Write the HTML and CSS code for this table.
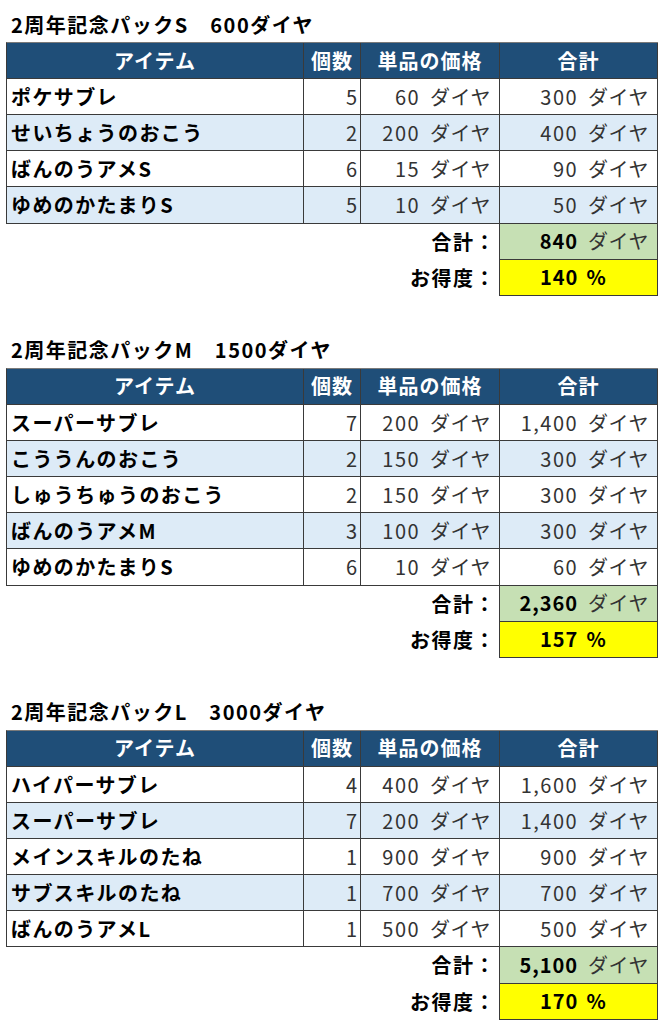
FILE: index.html
```html
<!DOCTYPE html>
<html lang="ja">
<head>
<meta charset="utf-8">
<title>2周年記念パック</title>
<link rel="stylesheet" href="styles.css">
</head>
<body>
<div class="page">

  <section class="pack">
    <div class="title">2周年記念パックS　600ダイヤ</div>
    <div class="tbl">
      <div class="c hd">アイテム</div><div class="c hd">個数</div><div class="c hd">単品の価格</div><div class="c hd">合計</div>
      <div class="c item">ポケサブレ</div><div class="c cnt">5</div><div class="c val"><span class="n">60</span><span class="u">ダイヤ</span></div><div class="c val tot"><span class="n">300</span><span class="u">ダイヤ</span></div>
      <div class="c item alt">せいちょうのおこう</div><div class="c cnt alt">2</div><div class="c val alt"><span class="n">200</span><span class="u">ダイヤ</span></div><div class="c val tot alt"><span class="n">400</span><span class="u">ダイヤ</span></div>
      <div class="c item">ばんのうアメS</div><div class="c cnt">6</div><div class="c val"><span class="n">15</span><span class="u">ダイヤ</span></div><div class="c val tot"><span class="n">90</span><span class="u">ダイヤ</span></div>
      <div class="c item alt">ゆめのかたまりS</div><div class="c cnt alt">5</div><div class="c val alt"><span class="n">10</span><span class="u">ダイヤ</span></div><div class="c val tot alt"><span class="n">50</span><span class="u">ダイヤ</span></div>
    </div>
    <div class="sum">
      <div class="lbl">合計：</div><div class="box green"><span class="n b">840</span><span class="u">ダイヤ</span></div>
      <div class="lbl">お得度：</div><div class="box yellow pct"><span class="pn">140</span><span class="ps">%</span></div>
    </div>
  </section>

  <section class="pack">
    <div class="title">2周年記念パックM　1500ダイヤ</div>
    <div class="tbl">
      <div class="c hd">アイテム</div><div class="c hd">個数</div><div class="c hd">単品の価格</div><div class="c hd">合計</div>
      <div class="c item">スーパーサブレ</div><div class="c cnt">7</div><div class="c val"><span class="n">200</span><span class="u">ダイヤ</span></div><div class="c val tot"><span class="n">1,400</span><span class="u">ダイヤ</span></div>
      <div class="c item alt">こううんのおこう</div><div class="c cnt alt">2</div><div class="c val alt"><span class="n">150</span><span class="u">ダイヤ</span></div><div class="c val tot alt"><span class="n">300</span><span class="u">ダイヤ</span></div>
      <div class="c item">しゅうちゅうのおこう</div><div class="c cnt">2</div><div class="c val"><span class="n">150</span><span class="u">ダイヤ</span></div><div class="c val tot"><span class="n">300</span><span class="u">ダイヤ</span></div>
      <div class="c item alt">ばんのうアメM</div><div class="c cnt alt">3</div><div class="c val alt"><span class="n">100</span><span class="u">ダイヤ</span></div><div class="c val tot alt"><span class="n">300</span><span class="u">ダイヤ</span></div>
      <div class="c item">ゆめのかたまりS</div><div class="c cnt">6</div><div class="c val"><span class="n">10</span><span class="u">ダイヤ</span></div><div class="c val tot"><span class="n">60</span><span class="u">ダイヤ</span></div>
    </div>
    <div class="sum">
      <div class="lbl">合計：</div><div class="box green"><span class="n b">2,360</span><span class="u">ダイヤ</span></div>
      <div class="lbl">お得度：</div><div class="box yellow pct"><span class="pn">157</span><span class="ps">%</span></div>
    </div>
  </section>

  <section class="pack">
    <div class="title">2周年記念パックL　3000ダイヤ</div>
    <div class="tbl">
      <div class="c hd">アイテム</div><div class="c hd">個数</div><div class="c hd">単品の価格</div><div class="c hd">合計</div>
      <div class="c item">ハイパーサブレ</div><div class="c cnt">4</div><div class="c val"><span class="n">400</span><span class="u">ダイヤ</span></div><div class="c val tot"><span class="n">1,600</span><span class="u">ダイヤ</span></div>
      <div class="c item alt">スーパーサブレ</div><div class="c cnt alt">7</div><div class="c val alt"><span class="n">200</span><span class="u">ダイヤ</span></div><div class="c val tot alt"><span class="n">1,400</span><span class="u">ダイヤ</span></div>
      <div class="c item">メインスキルのたね</div><div class="c cnt">1</div><div class="c val"><span class="n">900</span><span class="u">ダイヤ</span></div><div class="c val tot"><span class="n">900</span><span class="u">ダイヤ</span></div>
      <div class="c item alt">サブスキルのたね</div><div class="c cnt alt">1</div><div class="c val alt"><span class="n">700</span><span class="u">ダイヤ</span></div><div class="c val tot alt"><span class="n">700</span><span class="u">ダイヤ</span></div>
      <div class="c item">ばんのうアメL</div><div class="c cnt">1</div><div class="c val"><span class="n">500</span><span class="u">ダイヤ</span></div><div class="c val tot"><span class="n">500</span><span class="u">ダイヤ</span></div>
    </div>
    <div class="sum">
      <div class="lbl">合計：</div><div class="box green"><span class="n b">5,100</span><span class="u">ダイヤ</span></div>
      <div class="lbl">お得度：</div><div class="box yellow pct"><span class="pn">170</span><span class="ps">%</span></div>
    </div>
  </section>

</div>
</body>
</html>
```

FILE: styles.css
```css
* { box-sizing: border-box; }

html, body {
  margin: 0;
  padding: 0;
  background: #ffffff;
}

body {
  font-family: "Noto Sans CJK JP", "Noto Sans", sans-serif;
  font-size: 20px;
  color: #000;
}

.page {
  padding: 6px 0 0 6px;
  display: flex;
  flex-direction: column;
  gap: 36.1px;
}

.pack {
  display: flex;
  flex-direction: column;
}

.title {
  height: 36.1px;
  display: flex;
  align-items: center;
  padding-left: 5px;
  font-weight: 700;
  font-size: 20px;
  letter-spacing: 1.5px;
}

.tbl {
  display: grid;
  grid-template-columns: 297px 57px 139px 158px;
  grid-auto-rows: 36.1px;
  width: 652px;
  border-left: 1px solid #3a3a3a;
  border-top: 1px solid #7a7a7a;
}

.c {
  display: flex;
  align-items: center;
  border-right: 1px solid #3a3a3a;
  border-bottom: 1px solid #3a3a3a;
  background: #ffffff;
  white-space: nowrap;
  line-height: 1;
}

.c.alt { background: #ddebf7; }

.hd {
  background: #1f4e78;
  color: #ffffff;
  font-weight: 700;
  justify-content: center;
  letter-spacing: 1px;
}

.item {
  padding-left: 4px;
  font-weight: 700;
  letter-spacing: 1.4px;
}

.cnt {
  justify-content: flex-end;
  padding-right: 3px;
  color: #333;
}

.val {
  justify-content: flex-end;
  padding-right: 8px;
  color: #333;
}

.n {
  color: #333;
  letter-spacing: 1.5px;
}

.n.b {
  color: #000;
  font-weight: 700;
  letter-spacing: 1px;
}

.u {
  margin-left: 10px;
  color: #333;
  letter-spacing: 0.5px;
}

.sum {
  display: grid;
  grid-template-columns: 493px 159px;
  grid-auto-rows: 36.1px;
  width: 652px;
}

.lbl {
  display: flex;
  align-items: center;
  justify-content: flex-end;
  padding-right: 3px;
  font-weight: 700;
  line-height: 1;
  letter-spacing: 1.5px;
}

.box {
  display: flex;
  align-items: center;
  justify-content: flex-end;
  padding-right: 8px;
  border-left: 1px solid #3a3a3a;
  border-right: 1px solid #3a3a3a;
  border-bottom: 1px solid #3a3a3a;
  line-height: 1;
  white-space: nowrap;
}

.green { background: #c6e0b4; }

.yellow { background: #ffff00; }

.pct {
  justify-content: flex-start;
  padding-left: 40px;
  font-weight: 700;
}

.pn { letter-spacing: 1px; }

.ps { margin-left: 8px; }
```
